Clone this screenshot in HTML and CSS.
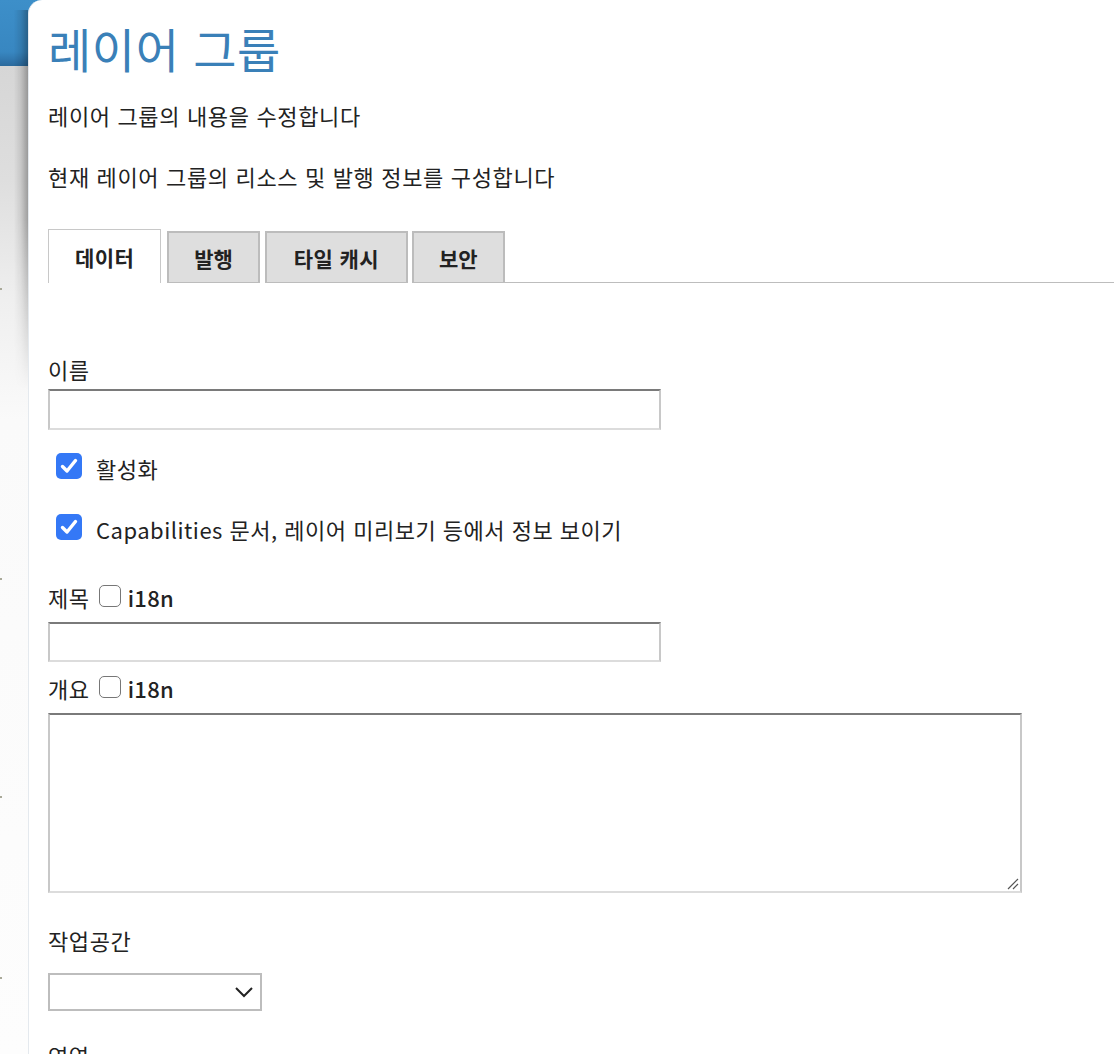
FILE: index.html
```html
<!DOCTYPE html>
<html lang="ko">
<head>
<meta charset="utf-8">
<title>레이어 그룹</title>
<link rel="stylesheet" href="styles.css">
</head>
<body>
<div class="page">
  <aside class="rail">
    <span class="mark m1"></span>
    <span class="mark m2"></span>
    <span class="mark m3"></span>
    <span class="mark m4"></span>
  </aside>
  <main class="panel">
    <h1 class="title">레이어 그룹</h1>
    <p class="lead first">레이어 그룹의 내용을 수정합니다</p>
    <p class="lead second">현재 레이어 그룹의 리소스 및 발행 정보를 구성합니다</p>

    <ul class="tabs">
      <li class="tab active">데이터</li>
      <li class="tab">발행</li>
      <li class="tab">타일 캐시</li>
      <li class="tab">보안</li>
      <li class="tab-rest"></li>
    </ul>

    <div class="form">
      <div class="label name-label">이름</div>
      <div class="text-input name-input"></div>

      <div class="check-row row1">
        <span class="cbox checked"><svg viewBox="0 0 26 26" width="26" height="26"><path d="M6.5 13.5 L11 18 L19.5 7.5" fill="none" stroke="#fff" stroke-width="3.4" stroke-linecap="round" stroke-linejoin="round"/></svg></span>
        <span class="check-text">활성화</span>
      </div>
      <div class="check-row row2">
        <span class="cbox checked"><svg viewBox="0 0 26 26" width="26" height="26"><path d="M6.5 13.5 L11 18 L19.5 7.5" fill="none" stroke="#fff" stroke-width="3.4" stroke-linecap="round" stroke-linejoin="round"/></svg></span>
        <span class="check-text">Capabilities 문서, 레이어 미리보기 등에서 정보 보이기</span>
      </div>

      <div class="label i18n-label title-label">제목<span class="small-box"></span><span class="i18n">i18n</span></div>
      <div class="text-input title-input"></div>

      <div class="label i18n-label abstract-label">개요<span class="small-box"></span><span class="i18n">i18n</span></div>
      <div class="textarea">
        <svg class="grip" viewBox="0 0 12 12" width="12" height="12"><path d="M1 11 L11 1 M6 11 L11 6" stroke="#555" stroke-width="1.2" fill="none"/></svg>
      </div>

      <div class="label ws-label">작업공간</div>
      <div class="select">
        <svg viewBox="0 0 20 12" width="20" height="12"><path d="M2 2 L10 10 L18 2" fill="none" stroke="#222" stroke-width="2"/></svg>
      </div>

      <div class="label bounds-label">영역</div>
    </div>
  </main>
</div>
</body>
</html>
```

FILE: styles.css
```css
html, body {
  margin: 0;
  padding: 0;
  background: #fff;
}

body {
  font-family: "Noto Sans CJK KR", "Noto Sans", sans-serif;
  color: #222;
  overflow: hidden;
}

.page {
  display: flex;
  min-height: 1054px;
  background: linear-gradient(to bottom,
    #3d8fc9 0px, #3887c1 52px, #2f72a8 62px, #2b6a9c 66px,
    #d6d6d6 66px, #dedede 180px, #efefef 300px, #fafafa 420px, #fdfdfd 1054px);
}

.rail {
  width: 28px;
  flex: 0 0 28px;
  display: flex;
  flex-direction: column;
}

.mark {
  display: block;
  width: 2px;
  height: 2px;
  background: #a9a999;
}
.m1 { margin-top: 288px; }
.m2 { margin-top: 288px; }
.m3 { margin-top: 216px; }
.m4 { margin-top: 179px; }

.panel {
  position: relative;
  flex: 1;
  background: #fff;
  border-top-left-radius: 14px;
  border-left: 1px solid #e4e9ee;
  padding: 0 0 0 19px;
}

.panel::before {
  content: "";
  position: absolute;
  left: -15px;
  top: 10px;
  width: 14px;
  height: 380px;
  background: linear-gradient(to right, rgba(0,0,0,0) 0%, rgba(0,0,0,0.1) 50%, rgba(0,0,0,0.3) 100%);
  -webkit-mask-image: linear-gradient(to bottom, #000 0%, #000 55%, transparent 100%);
  mask-image: linear-gradient(to bottom, #000 0%, #000 55%, transparent 100%);
}

.title {
  margin: 21px 0 0;
  font-size: 47px;
  line-height: 54px;
  font-weight: 400;
  color: #3a80b8;
  letter-spacing: 0.6px;
}

.lead {
  margin: 0;
  font-size: 22px;
  line-height: 30px;
  letter-spacing: 0.65px;
}
.lead.first { margin-top: 25px; }
.lead.second { margin-top: 31px; }

.tabs {
  list-style: none;
  margin: 38px 0 0;
  padding: 0;
  display: flex;
  align-items: flex-end;
  height: 54px;
}

.tab {
  box-sizing: border-box;
  height: 52px;
  padding: 0 26px;
  margin-right: 5px;
  display: flex;
  align-items: center;
  font-size: 21px;
  font-weight: 700;
  letter-spacing: 0.4px;
  background: #dedede;
  border: 2px solid #bcbcbc;
  border-bottom: 1px solid #bcbcbc;
}
.tab:nth-child(2), .tab:nth-child(4) {
  letter-spacing: 0;
  padding: 0 25px;
}
.tab:nth-child(3) {
  padding: 0 27px;
  margin-right: 4px;
}

.tab.active {
  height: 54px;
  background: #fff;
  border: 1px solid #c8c8c8;
  border-bottom: none;
  margin-right: 6px;
}

.tab-rest {
  flex: 1;
  align-self: flex-end;
  height: 1px;
  border-bottom: 1px solid #bdbdbd;
  margin-left: -6px;
}

.form {
  display: flex;
  flex-direction: column;
  align-items: flex-start;
}

.label {
  font-size: 22px;
  line-height: 30px;
  letter-spacing: 0.6px;
  display: flex;
  align-items: center;
}

.name-label { margin-top: 71px; }

.text-input {
  box-sizing: border-box;
  width: 613px;
  background: #fff;
  border: 2px solid #c8c8c8;
  border-top-color: #7a7a7a;
  border-bottom-color: #dcdcdc;
}
.name-input { margin-top: 5px; height: 41px; }

.check-row {
  display: flex;
  align-items: center;
  height: 30px;
  padding-left: 8px;
}
.row1 { margin-top: 23px; }
.row2 { margin-top: 31px; }

.cbox {
  width: 26px;
  height: 26px;
  border-radius: 5px;
  background: #3478f6;
  display: block;
  margin-top: -5px;
}
.cbox svg { display: block; }

.check-text {
  margin-left: 14px;
  font-size: 22px;
  line-height: 30px;
  letter-spacing: 0.5px;
}

.small-box {
  box-sizing: border-box;
  display: block;
  width: 22px;
  height: 22px;
  border: 1.5px solid #777;
  border-radius: 5px;
  margin-left: 9px;
  margin-right: 7px;
  margin-top: -3px;
}
.i18n {
  font-size: 22px;
  font-weight: 500;
  letter-spacing: 0.3px;
}

.title-label { margin-top: 38px; }
.title-input { margin-top: 10px; height: 40px; }
.abstract-label { margin-top: 11px; }

.textarea {
  position: relative;
  box-sizing: border-box;
  margin-top: 10px;
  width: 974px;
  height: 180px;
  background: #fff;
  border: 2px solid #c8c8c8;
  border-top-color: #7a7a7a;
  border-bottom-color: #dcdcdc;
}
.grip {
  position: absolute;
  right: 1px;
  bottom: 1px;
}

.ws-label { margin-top: 32px; }

.select {
  box-sizing: border-box;
  margin-top: 18px;
  width: 214px;
  height: 38px;
  border: 2px solid #bdbdbd;
  display: flex;
  align-items: center;
  justify-content: flex-end;
  padding-right: 6px;
  background: #fff;
}
.select svg { display: block; }

.bounds-label { margin-top: 29px; }
```
